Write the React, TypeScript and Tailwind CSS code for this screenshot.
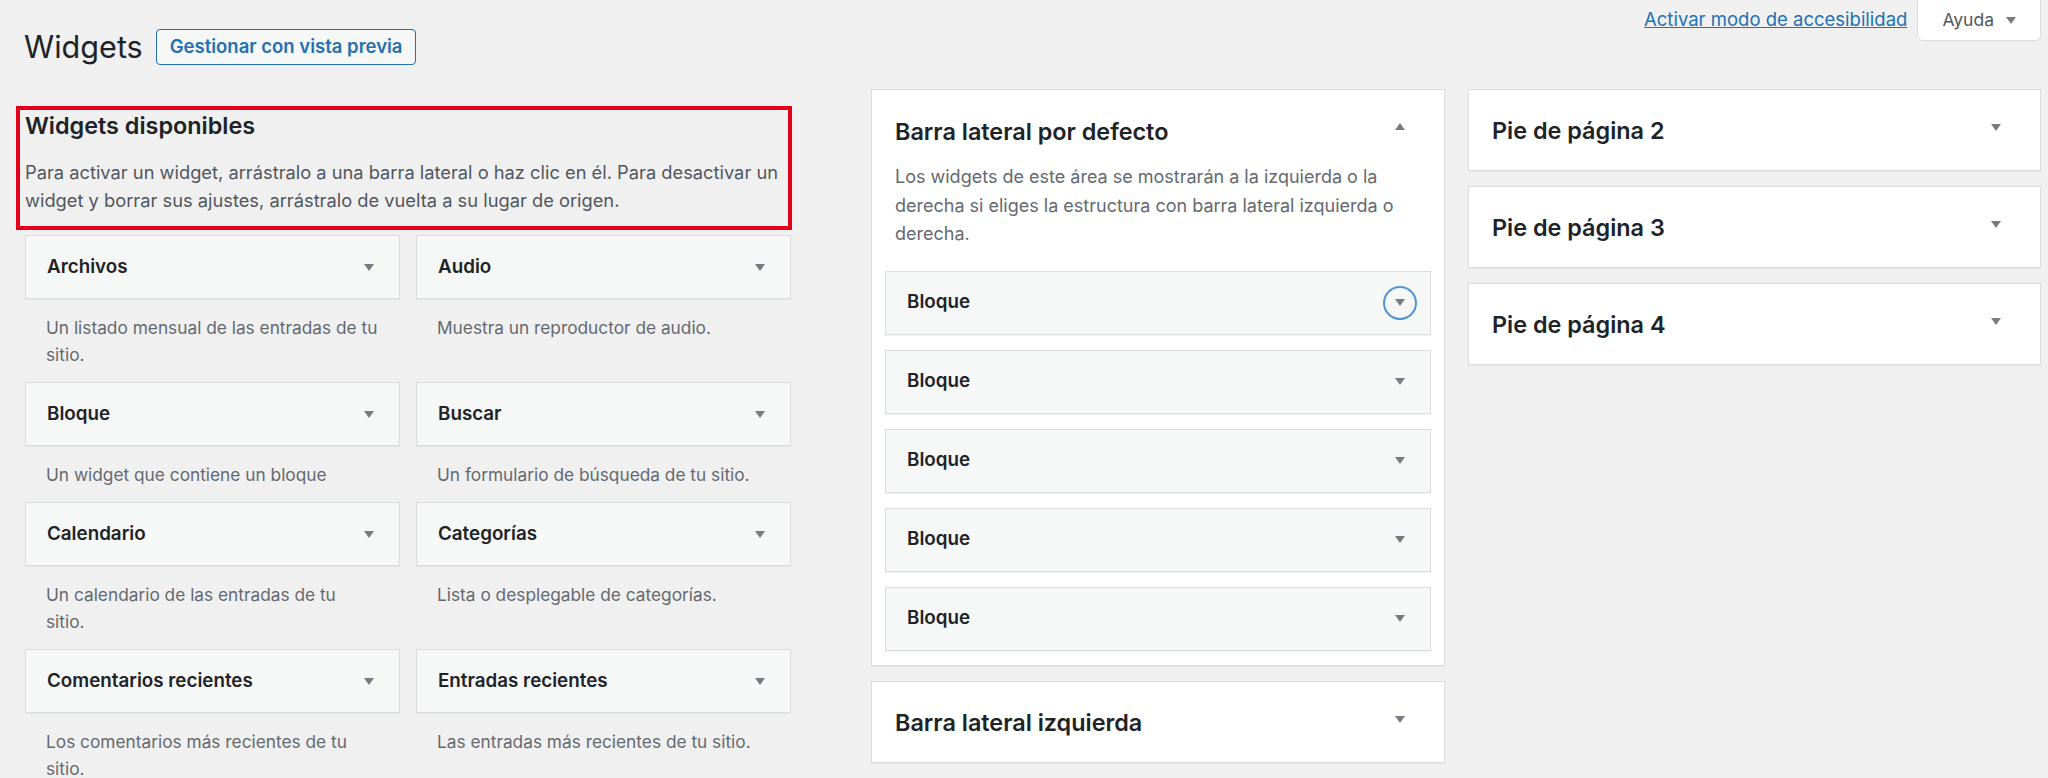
import React from 'react'

const available = [
  { title: 'Archivos', desc: ['Un listado mensual de las entradas de tu', 'sitio.'] },
  { title: 'Audio', desc: ['Muestra un reproductor de audio.'] },
  { title: 'Bloque', desc: ['Un widget que contiene un bloque'] },
  { title: 'Buscar', desc: ['Un formulario de búsqueda de tu sitio.'] },
  { title: 'Calendario', desc: ['Un calendario de las entradas de tu', 'sitio.'] },
  { title: 'Categorías', desc: ['Lista o desplegable de categorías.'] },
  { title: 'Comentarios recientes', desc: ['Los comentarios más recientes de tu', 'sitio.'] },
  { title: 'Entradas recientes', desc: ['Las entradas más recientes de tu sitio.'] },
]

const Arrow = ({ up = false }: { up?: boolean }) => (
  <svg width="10" height="7" viewBox="0 0 10 7" className="block">
    <path d={up ? 'M0 7 L10 7 L5 0 Z' : 'M0 0 L10 0 L5 7 Z'} fill="#787c82" />
  </svg>
)

const WidgetBar = ({ title, focused = false }: { title: string; focused?: boolean }) => (
  <div className="h-[64px] flex items-center justify-between pl-[21px] pr-[13px] bg-[#f6f7f7] border border-[#dcdcde] shadow-[0_1px_1px_rgba(0,0,0,0.04)]">
    <span className="text-[18.8px] font-semibold text-[#1d2327]">{title}</span>
    <div
      className={
        'w-[34px] h-[34px] rounded-full flex items-center justify-center ' +
        (focused ? 'border-2 border-[#4f94d4]' : '')
      }
    >
      <Arrow />
    </div>
  </div>
)

const Panel = ({ title }: { title: string }) => (
  <div className="bg-white border border-[#dcdcde] shadow-[0_1px_1px_rgba(0,0,0,0.04)] h-[82px] flex items-start justify-between pl-[23px] pr-[39px] pt-[27px]">
    <h2 className="text-[23.4px] leading-[28px] font-semibold text-[#1d2327]">{title}</h2>
    <div className="pt-[7px]">
      <Arrow />
    </div>
  </div>
)

export default function App() {
  return (
    <div className="w-full h-[778px] overflow-hidden bg-[#f0f0f1] font-['Inter',sans-serif] text-[#1d2327]">
      {/* Header */}
      <div className="flex items-start justify-between">
        <div className="flex items-center gap-[13px] pl-[24px] pt-[29px]">
          <h1 className="text-[30.6px] leading-[36px] font-normal text-[#1d2327]">Widgets</h1>
          <button className="h-[36px] px-[13px] rounded-[4px] border border-[#2271b1] bg-[#f6f7f7] text-[#2271b1] text-[18.5px] font-semibold">
            Gestionar con vista previa
          </button>
        </div>
        <div className="flex items-start gap-[10px] pr-[7px]">
          <a href="#" className="mt-[8px] text-[18.5px] leading-[22px] text-[#2271b1] underline">
            Activar modo de accesibilidad
          </a>
          <div className="h-[42px] -mt-[1px] flex items-center gap-[12px] pl-[24px] pr-[24px] bg-white border border-[#dcdcde] rounded-b-[6px] text-[17.5px] text-[#50575e]">
            Ayuda
            <Arrow />
          </div>
        </div>
      </div>

      {/* Main */}
      <div className="flex items-start mt-[24px]">
        {/* Available widgets */}
        <div className="w-[776px] ml-[16px] pt-[17px]">
          <div className="border-4 border-[#e2001a] pl-[5px] pt-[2px] pb-[12px]">
            <h2 className="text-[23.4px] leading-[28px] font-semibold text-[#1d2327]">Widgets disponibles</h2>
            <p className="mt-[18px] text-[18.3px] leading-[28px] text-[#50575e]">
              Para activar un widget, arrástralo a una barra lateral o haz clic en él. Para desactivar un widget y borrar sus ajustes, arrástralo de vuelta a su lugar de origen.
            </p>
          </div>
          <div className="grid grid-cols-2 gap-x-[16px] pl-[9px] pr-[1px] mt-[5px]">
            {available.map((w) => (
              <div key={w.title}>
                <WidgetBar title={w.title} />
                <p className="pl-[21px] pr-[6px] pt-[15px] pb-[14px] text-[17.3px] leading-[27px] text-[#646970] whitespace-nowrap">
                  {w.desc.map((line, i) => (
                    <React.Fragment key={i}>
                      {i > 0 && <br />}
                      {line}
                    </React.Fragment>
                  ))}
                </p>
              </div>
            ))}
          </div>
        </div>

        {/* Sidebars */}
        <div className="w-[574px] ml-[79px] flex flex-col gap-[15px]">
          <div className="bg-white border border-[#dcdcde] shadow-[0_1px_1px_rgba(0,0,0,0.04)] pb-[14px]">
            <div className="flex items-start justify-between pl-[23px] pr-[39px] pt-[28px]">
              <h2 className="text-[23.4px] leading-[28px] font-semibold text-[#1d2327]">Barra lateral por defecto</h2>
              <div className="pt-[5px]">
                <Arrow up />
              </div>
            </div>
            <p className="pl-[23px] pr-[20px] mt-[17px] text-[18px] leading-[28.5px] text-[#646970]">
              Los widgets de este área se mostrarán a la izquierda o la derecha si eliges la estructura con barra lateral izquierda o derecha.
            </p>
            <div className="mx-[13px] mt-[22px] flex flex-col gap-[15px]">
              <WidgetBar title="Bloque" focused />
              <WidgetBar title="Bloque" />
              <WidgetBar title="Bloque" />
              <WidgetBar title="Bloque" />
              <WidgetBar title="Bloque" />
            </div>
          </div>
          <Panel title="Barra lateral izquierda" />
        </div>

        {/* Footers */}
        <div className="w-[573px] ml-[23px] flex flex-col gap-[15px]">
          <Panel title="Pie de página 2" />
          <Panel title="Pie de página 3" />
          <Panel title="Pie de página 4" />
        </div>
      </div>
    </div>
  )
}
